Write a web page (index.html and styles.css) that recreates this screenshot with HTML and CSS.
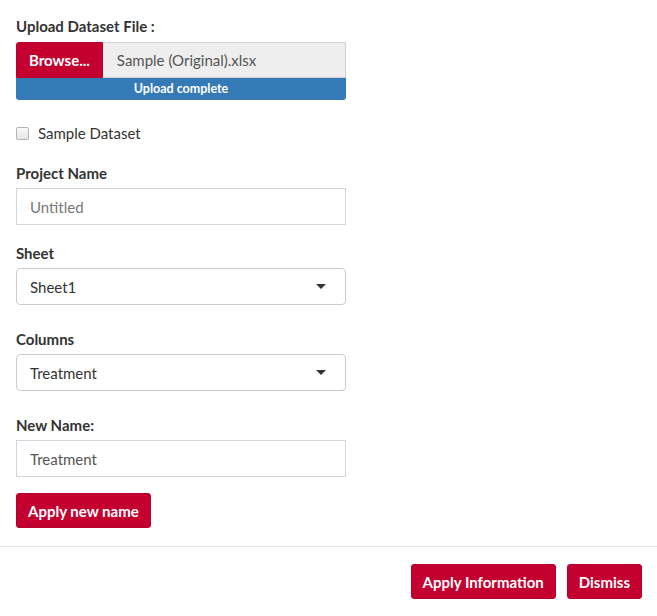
FILE: index.html
```html
<!DOCTYPE html>
<html lang="en">
<head>
<meta charset="UTF-8">
<title>Upload Dataset</title>
<link rel="stylesheet" href="styles.css">
</head>
<body>
<div class="modal">
  <div class="modal-body">
    <div class="form-group upload-group">
      <label class="control-label">Upload Dataset File :</label>
      <div class="input-group">
        <span class="btn btn-red btn-file">Browse...</span>
        <input type="text" class="file-name" value="Sample (Original).xlsx" readonly>
      </div>
      <div class="progress">
        <div class="progress-bar">Upload complete</div>
      </div>
    </div>

    <div class="checkbox">
      <label><input type="checkbox"> <span>Sample Dataset</span></label>
    </div>

    <div class="form-group">
      <label class="control-label">Project Name</label>
      <input type="text" class="form-control" placeholder="Untitled">
    </div>

    <div class="form-group select-group">
      <label class="control-label">Sheet</label>
      <div class="select-box">
        <span>Sheet1</span>
        <span class="caret"></span>
      </div>
    </div>

    <div class="form-group select-group">
      <label class="control-label">Columns</label>
      <div class="select-box">
        <span>Treatment</span>
        <span class="caret"></span>
      </div>
    </div>

    <div class="form-group name-group">
      <label class="control-label">New Name:</label>
      <input type="text" class="form-control" value="Treatment">
    </div>

    <button class="btn btn-red">Apply new name</button>
  </div>

  <div class="modal-footer">
    <button class="btn btn-red">Apply Information</button>
    <button class="btn btn-red">Dismiss</button>
  </div>
</div>
</body>
</html>
```

FILE: styles.css
```css
body {
  margin: 0;
  background: #fff;
  color: #333;
  font-family: Lato, "Open Sans", Arial, sans-serif;
  font-size: 15px;
  line-height: 20px;
}
.modal {
  width: 657px;
}
.modal-body {
  padding: 16px 311px 18px 16px;
}
.control-label {
  display: block;
  font-weight: bold;
  margin-bottom: 5px;
}
.upload-group .control-label { margin-bottom: 6px; }
.form-group { margin-bottom: 18px; }
.select-group { margin-bottom: 24px; }
.name-group { margin-bottom: 16px; }

.input-group {
  display: flex;
  height: 36px;
}
.btn {
  font-family: inherit;
  font-size: 15px;
  font-weight: bold;
  line-height: 20px;
  padding: 7px 11px 6px;
  border: 1px solid transparent;
  border-radius: 3px;
  cursor: pointer;
}
.btn-red {
  background: #c3002f;
  border-color: #b8002c;
  color: #fff;
}
.btn-file {
  display: flex;
  align-items: center;
  padding: 0 12px;
  border-radius: 3px 0 0 0;
}
.file-name {
  flex: 1;
  min-width: 0;
  border: 1px solid #d0d0d6;
  border-left: none;
  background: #eee;
  color: #555;
  font-family: inherit;
  font-size: 15px;
  padding: 0 14px;
  outline: none;
}
.progress {
  height: 22px;
  background: #f5f5f5;
  border-radius: 0 0 3px 3px;
  overflow: hidden;
}
.progress-bar {
  height: 100%;
  background: #337ab7;
  color: #fff;
  font-size: 12.5px;
  font-weight: bold;
  line-height: 22px;
  text-align: center;
}

.checkbox {
  margin: 23px 0 20px;
}
.checkbox label {
  display: flex;
  align-items: center;
  gap: 9px;
  color: #333;
}
.checkbox input {
  appearance: none;
  width: 13px;
  height: 13px;
  margin: 0;
  border: 1px solid #b5b5b5;
  border-radius: 2px;
  background: linear-gradient(#fafafa, #e6e6e6);
}

.form-control {
  display: block;
  box-sizing: border-box;
  width: 100%;
  height: 37px;
  padding: 0 13px;
  border: 1px solid #d2d6de;
  font-family: inherit;
  font-size: 15px;
  color: #555;
  outline: none;
}
.form-control::placeholder { color: #777; }

.select-box {
  display: flex;
  align-items: center;
  justify-content: space-between;
  box-sizing: border-box;
  height: 37px;
  padding: 0 19px 0 13px;
  border: 1px solid #ccc;
  border-radius: 4px;
  color: #333;
}
.caret {
  width: 0;
  height: 0;
  border-left: 5px solid transparent;
  border-right: 5px solid transparent;
  border-top: 5px solid #333;
}

.modal-footer {
  display: flex;
  justify-content: flex-end;
  gap: 11px;
  padding: 17px 15px;
  border-top: 1px solid #e5e5e5;
}
```
